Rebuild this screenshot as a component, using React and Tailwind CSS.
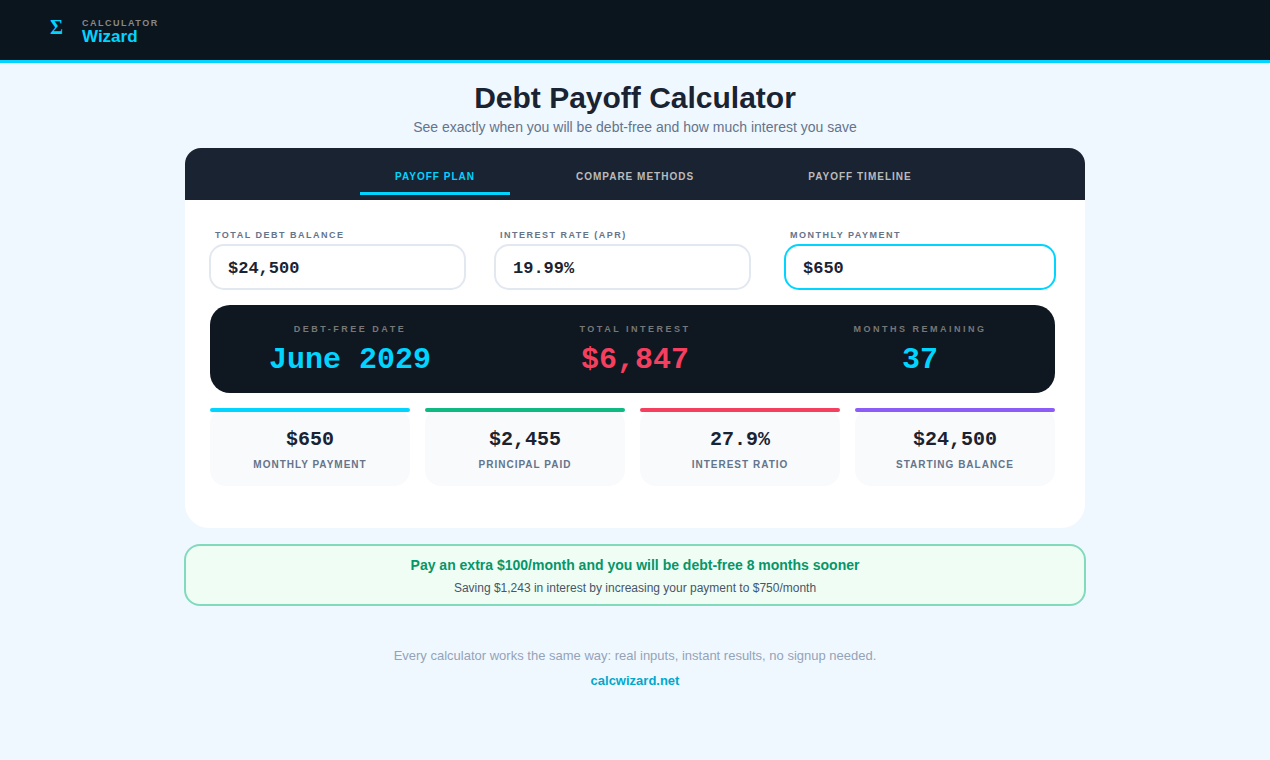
import React, { useState } from "react";

const tabs = [
  { id: "plan", label: "PAYOFF PLAN", cell: "col-start-2" },
  { id: "compare", label: "COMPARE METHODS", cell: "col-start-3" },
  { id: "timeline", label: "PAYOFF TIMELINE", cell: "col-start-4" },
];

const fields = [
  { name: "balance", label: "TOTAL DEBT BALANCE", cell: "pr-[28px]", border: "border-[#e2e8f0]" },
  { name: "rate", label: "INTEREST RATE (APR)", cell: "pr-[33px]", border: "border-[#e2e8f0]" },
  { name: "payment", label: "MONTHLY PAYMENT", cell: "", border: "border-[#00d4ff]" },
];

const results = [
  { label: "DEBT-FREE DATE", value: "June 2029", color: "text-[#00d4ff]" },
  { label: "TOTAL INTEREST", value: "$6,847", color: "text-[#f43f5e]" },
  { label: "MONTHS REMAINING", value: "37", color: "text-[#00d4ff]" },
];

const stats = [
  { label: "MONTHLY PAYMENT", value: "$650", bar: "bg-[#00d4ff]" },
  { label: "PRINCIPAL PAID", value: "$2,455", bar: "bg-[#10b981]" },
  { label: "INTEREST RATIO", value: "27.9%", bar: "bg-[#f43f5e]" },
  { label: "STARTING BALANCE", value: "$24,500", bar: "bg-[#8b5cf6]" },
];

const Header = () => (
  <header className="flex items-start h-[63px] pl-[50px] bg-[#0b151e] border-b-3 border-[#00d4ff]">
    <span className="w-8 pt-4 text-[20px] leading-[22px] font-bold text-[#00d4ff] font-['Liberation_Serif',serif]">Σ</span>
    <div className="pt-[18px] font-bold">
      <div className="text-[9px] leading-[10px] tracking-[1.5px] text-[#888888]">CALCULATOR</div>
      <div className="text-[17px] leading-[18px] text-[#00d4ff]">Wizard</div>
    </div>
  </header>
);

const App = () => {
  const [active, setActive] = useState("plan");
  const [form, setForm] = useState({ balance: "$24,500", rate: "19.99%", payment: "$650" });

  return (
    <div className="min-h-screen bg-[#f0f8ff] font-['Liberation_Sans',Arial,sans-serif]">
      <Header />

      <main className="w-full max-w-[900px] mx-auto">
        <div className="pt-4 text-center">
          <h1 className="text-[30px] leading-[38px] font-bold text-[#1a2332]">Debt Payoff Calculator</h1>
          <p className="text-[14px] leading-5 text-[#64748b]">See exactly when you will be debt-free and how much interest you save</p>
        </div>

        <section className="mt-[11px] pb-[42px] bg-white rounded-t-[16px] rounded-b-[24px] overflow-hidden">
          <div className="grid grid-cols-[7fr_6fr_10fr_8fr_5fr] h-[52px] pt-3 pb-[5px] bg-[#1a2332]">
            {tabs.map((t) => (
              <button
                key={t.id}
                type="button"
                onClick={() => setActive(t.id)}
                className={`${t.cell} pt-[1px] text-[10px] leading-4 font-bold tracking-[1px] border-b-3 cursor-pointer ${
                  active === t.id ? "text-[#00d4ff] border-[#00d4ff]" : "text-[#bbbbbb] border-transparent"
                }`}
              >
                {t.label}
              </button>
            ))}
          </div>

          <form className="grid grid-cols-[285fr_290fr_272fr] pt-[29px] pl-[24px] pr-[29px]" onSubmit={(e) => e.preventDefault()}>
            {fields.map((f) => (
              <div key={f.name} className={f.cell}>
                <label htmlFor={f.name} className="block pl-[6px] text-[9px] leading-3 font-bold tracking-[1.5px] text-[#64748b]">
                  {f.label}
                </label>
                <input
                  id={f.name}
                  name={f.name}
                  className={`block w-full h-[46px] mt-[3px] px-[17px] pt-[2px] border-2 rounded-[15px] bg-white text-[17px] font-bold text-[#1a2332] outline-none font-['Liberation_Mono',monospace] ${f.border}`}
                  value={form[f.name]}
                  onChange={(e) => setForm({ ...form, [f.name]: e.target.value })}
                />
              </div>
            ))}
          </form>

          <div className="pt-[15px] pl-[25px] pr-[30px]">
            <div className="grid grid-cols-[270fr_300fr_270fr] pl-[5px] pt-[18px] pb-[15px] rounded-[20px] bg-[#0f1720] text-center font-bold">
              {results.map((r) => (
                <div key={r.label}>
                  <div className="text-[9px] leading-3 tracking-[2.5px] text-[#777777]">{r.label}</div>
                  <div className={`mt-[7px] text-[30px] leading-9 font-['Liberation_Mono',monospace] ${r.color}`}>{r.value}</div>
                </div>
              ))}
            </div>

            <div className="grid grid-cols-4 gap-[15px] mt-[15px] text-center font-bold">
              {stats.map((s) => (
                <div key={s.label} className="h-[78px] rounded-[16px] bg-[#f8fafc]">
                  <div className={`h-1 rounded-[2px] ${s.bar}`} />
                  <div className="pt-4 text-[20px] leading-6 text-[#1a2332] font-['Liberation_Mono',monospace]">{s.value}</div>
                  <div className="mt-[7px] text-[10px] leading-3 tracking-[1px] text-[#64748b]">{s.label}</div>
                </div>
              ))}
            </div>
          </div>
        </section>

        <section className="-mx-px mt-4 pt-[9px] pb-[7px] border-2 border-[#82dabc] rounded-[16px] bg-[#f0fdf4] text-center">
          <p className="text-[14px] leading-5 font-bold text-[#059669]">Pay an extra $100/month and you will be debt-free 8 months sooner</p>
          <p className="mt-1 text-[12px] leading-[18px] text-[#475569]">Saving $1,243 in interest by increasing your payment to $750/month</p>
        </section>
      </main>

      <footer className="pt-10 text-center text-[13px] leading-5">
        <p className="text-[#94a3b8]">Every calculator works the same way: real inputs, instant results, no signup needed.</p>
        <a href="#" className="inline-block mt-[5px] font-bold text-[#00a8cc]">calcwizard.net</a>
      </footer>
    </div>
  );
};

export default App;
